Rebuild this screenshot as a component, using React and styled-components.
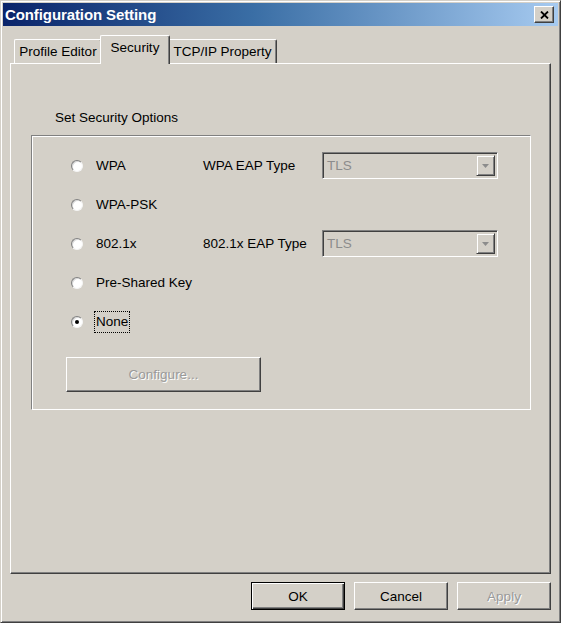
import React from "react";
import styled, { createGlobalStyle, css } from "styled-components";

const Global = createGlobalStyle`
  html, body { margin: 0; padding: 0; background: #ffffff; }
  body { font-family: "Liberation Sans", Arial, sans-serif; font-size: 13.5px; color: #000; }
`;

const FACE = "#d4d0c8";
const SHADOW = "#808080";
const DARK = "#404040";

const Window = styled.div`
  box-sizing: border-box;
  width: 561px;
  height: 623px;
  background: ${FACE};
  border: 1px solid;
  border-color: ${FACE} ${DARK} ${DARK} ${FACE};
  box-shadow: inset 1px 1px #ffffff, inset -1px -1px ${SHADOW};
  padding: 2px;
  display: flex;
  flex-direction: column;
`;

const TitleBar = styled.div`
  height: 23px;
  flex: none;
  display: flex;
  align-items: center;
  justify-content: space-between;
  padding: 0 4px 0 2px;
  background: linear-gradient(to right, #0a246a 0%, #3a6ea5 45%, #a6caf0 100%);
`;

const Title = styled.span`
  color: #ffffff;
  font-weight: bold;
  font-size: 15px;
  letter-spacing: -0.1px;
`;

const CloseButton = styled.div`
  box-sizing: border-box;
  width: 20px;
  height: 17px;
  background: ${FACE};
  border: 1px solid;
  border-color: #ffffff ${DARK} ${DARK} #ffffff;
  box-shadow: inset -1px -1px ${SHADOW};
  display: flex;
  align-items: center;
  justify-content: center;
`;

const Body = styled.div`
  flex: 1;
  display: flex;
  flex-direction: column;
  padding: 9px 7px 10px 7px;
`;

const TabStrip = styled.div`
  height: 28px;
  display: flex;
  align-items: flex-end;
  padding-left: 4px;
  position: relative;
  z-index: 1;
`;

const Tab = styled.div`
  box-sizing: border-box;
  height: 24px;
  width: ${(p) => p.$w}px;
  display: flex;
  align-items: center;
  justify-content: center;
  background: ${FACE};
  border-top: 1px solid #ffffff;
  border-left: 1px solid #ffffff;
  border-right: 1px solid ${DARK};
  box-shadow: inset -1px 0 ${SHADOW};
  border-radius: 2px 2px 0 0;
  font-size: 13.5px;
  padding-bottom: 1px;
  ${(p) =>
    p.$active &&
    css`
      height: 29px;
      margin: 0 -2px -1px -2px;
      padding-bottom: 6px;
      position: relative;
      z-index: 2;
    `}
`;

const Panel = styled.div`
  box-sizing: border-box;
  height: 511px;
  border: 1px solid;
  border-color: #ffffff ${DARK} ${DARK} #ffffff;
  box-shadow: inset -1px -1px ${SHADOW};
  padding: 45px 19px 0 20px;
  display: flex;
  flex-direction: column;
`;

const GroupCaption = styled.div`
  margin-left: 24px;
  height: 17px;
  line-height: 17px;
`;

const GroupBox = styled.div`
  box-sizing: border-box;
  margin-top: 9px;
  height: 275px;
  border: 1px solid;
  border-color: ${SHADOW} #ffffff #ffffff ${SHADOW};
  box-shadow: inset 1px 1px #ffffff, 1px 1px ${SHADOW} inset;
  padding: 10px 0 0 39px;
  display: flex;
  flex-direction: column;
`;

const GroupInner = styled.div`
  display: flex;
  flex-direction: column;
`;

const Row = styled.div`
  height: 39px;
  display: flex;
  align-items: center;
`;

const RadioLabel = styled.label`
  width: 132px;
  display: flex;
  align-items: center;
  gap: 12px;
`;

const RadioCircle = styled.span`
  box-sizing: border-box;
  width: 12px;
  height: 12px;
  border-radius: 50%;
  background: #ffffff;
  border: 1px solid;
  border-color: ${SHADOW} #f4f4f4 #f4f4f4 ${SHADOW};
  box-shadow: inset 1px 1px ${DARK}33;
  display: flex;
  align-items: center;
  justify-content: center;
  flex: none;
`;

const RadioDot = styled.span`
  width: 4px;
  height: 4px;
  border-radius: 50%;
  background: #000;
`;

const RadioText = styled.span`
  padding: 2px 1px;
  margin-left: -1px;
  border: 1px dotted ${(p) => (p.$focus ? "#000" : "transparent")};
  line-height: 16px;
`;

const EapLabel = styled.span`
  width: 119px;
`;

const Select = styled.div`
  box-sizing: border-box;
  width: 176px;
  height: 27px;
  border: 1px solid;
  border-color: ${SHADOW} #ffffff #ffffff ${SHADOW};
  box-shadow: inset 1px 1px ${DARK}, inset -1px -1px ${FACE};
  display: flex;
  align-items: center;
  justify-content: space-between;
  padding: 2px 2px 2px 4px;
  color: #8c8c8c;
`;

const ArrowButton = styled.div`
  box-sizing: border-box;
  width: 19px;
  height: 100%;
  background: ${FACE};
  border: 1px solid;
  border-color: ${FACE} ${DARK} ${DARK} ${FACE};
  box-shadow: inset 1px 1px #ffffff, inset -1px -1px ${SHADOW};
  display: flex;
  align-items: center;
  justify-content: center;
`;

const buttonBase = css`
  box-sizing: border-box;
  background: ${FACE};
  border: 1px solid;
  border-color: #ffffff ${DARK} ${DARK} #ffffff;
  box-shadow: inset -1px -1px ${SHADOW};
  display: flex;
  align-items: center;
  justify-content: center;
  font-family: inherit;
  font-size: 13.5px;
  color: ${(p) => (p.$disabled ? "#9a9a9a" : "#000")};
  text-shadow: ${(p) => (p.$disabled ? "1px 1px #ffffff" : "none")};
`;

const ConfigureButton = styled.div`
  ${buttonBase}
  width: 195px;
  height: 35px;
  margin-top: 16px;
  margin-left: -5px;
`;

const Footer = styled.div`
  margin-top: 8px;
  height: 28px;
  display: flex;
  justify-content: flex-end;
  gap: 9px;
`;

const DialogButton = styled.div`
  ${buttonBase}
  width: 94px;
  height: 28px;
  ${(p) =>
    p.$default &&
    css`
      border: 1px solid #000;
      box-shadow: inset 1px 1px #ffffff, inset -1px -1px ${DARK}, inset -2px -2px ${SHADOW};
    `}
`;

function Radio({ label, checked, focus }) {
  return (
    <RadioLabel>
      <RadioCircle>{checked && <RadioDot />}</RadioCircle>
      <RadioText $focus={focus}>{label}</RadioText>
    </RadioLabel>
  );
}

function DropDown({ value }) {
  return (
    <Select>
      <span>{value}</span>
      <ArrowButton>
        <svg width="7" height="4" viewBox="0 0 7 4">
          <path d="M0 0 H7 L3.5 4 Z" fill="#8c8c8c" />
        </svg>
      </ArrowButton>
    </Select>
  );
}

export default function App() {
  return (
    <>
      <Global />
      <Window>
        <TitleBar>
          <Title>Configuration Setting</Title>
          <CloseButton>
            <svg width="9" height="8" viewBox="0 0 9 8">
              <path d="M1 0.5 L8 7.5 M8 0.5 L1 7.5" stroke="#000" strokeWidth="1.8" />
            </svg>
          </CloseButton>
        </TitleBar>
        <Body>
          <TabStrip>
            <Tab $w={88}>Profile Editor</Tab>
            <Tab $w={70} $active>Security</Tab>
            <Tab $w={109}>TCP/IP Property</Tab>
          </TabStrip>
          <Panel>
            <GroupCaption>Set Security Options</GroupCaption>
            <GroupBox>
              <GroupInner>
                <Row>
                  <Radio label="WPA" />
                  <EapLabel>WPA EAP Type</EapLabel>
                  <DropDown value="TLS" />
                </Row>
                <Row>
                  <Radio label="WPA-PSK" />
                </Row>
                <Row>
                  <Radio label="802.1x" />
                  <EapLabel>802.1x EAP Type</EapLabel>
                  <DropDown value="TLS" />
                </Row>
                <Row>
                  <Radio label="Pre-Shared Key" />
                </Row>
                <Row>
                  <Radio label="None" checked focus />
                </Row>
              </GroupInner>
              <ConfigureButton $disabled>Configure...</ConfigureButton>
            </GroupBox>
          </Panel>
          <Footer>
            <DialogButton $default>OK</DialogButton>
            <DialogButton>Cancel</DialogButton>
            <DialogButton $disabled>Apply</DialogButton>
          </Footer>
        </Body>
      </Window>
    </>
  );
}
